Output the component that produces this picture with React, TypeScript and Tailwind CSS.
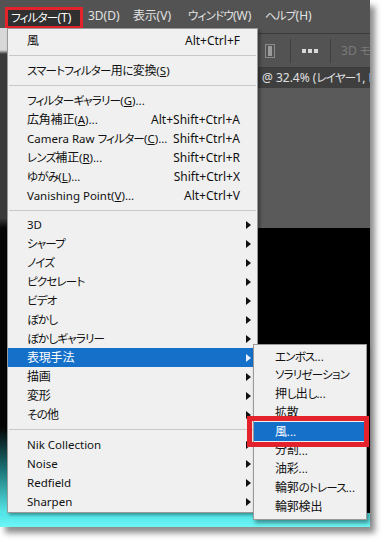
import React from "react";

const SPLIT = /([\u3040-\u30ff\uff00-\uffef]+|[\u3400-\u9fff]+)/;
const KANA = /^[\u3040-\u30ff\uff00-\uffef]+$/;
const KANJI = /^[\u3400-\u9fff]+$/;

function j(s: string): React.ReactNode {
  return s.split(SPLIT).map((part, i) =>
    KANA.test(part) ? (
      <span key={i} className="text-[11.5px] tracking-[-0.8px]">
        {part}
      </span>
    ) : KANJI.test(part) ? (
      <span key={i} className="text-[12px] tracking-[-0.2px]">
        {part}
      </span>
    ) : (
      <React.Fragment key={i}>{part}</React.Fragment>
    )
  );
}

const M = ({ pre, u, post = "" }: { pre: string; u: string; post?: string }) => (
  <>
    {j(pre)}(<u>{u}</u>){post}
  </>
);

type Row =
  | { sep: true; h: number }
  | { sep?: false; label: React.ReactNode; shortcut?: string; arrow?: boolean; active?: boolean };

const Arrow = ({ white }: { white?: boolean }) => (
  <svg width="5" height="8" viewBox="0 0 5 8" className="block">
    <polygon points="0,0 5,4 0,8" fill={white ? "#e8f2ff" : "#111"} />
  </svg>
);

const rows: Row[] = [
  { label: j("風"), shortcut: "Alt+Ctrl+F" },
  { sep: true, h: 11 },
  { label: <M pre="スマートフィルター用に変換" u="S" /> },
  { sep: true, h: 11 },
  { label: <M pre="フィルターギャラリー" u="G" post="..." /> },
  { label: <M pre="広角補正" u="A" post="..." />, shortcut: "Alt+Shift+Ctrl+A" },
  { label: <M pre="Camera Raw フィルター" u="C" post="..." />, shortcut: "Shift+Ctrl+A" },
  { label: <M pre="レンズ補正" u="R" post="..." />, shortcut: "Shift+Ctrl+R" },
  { label: <M pre="ゆがみ" u="L" post="..." />, shortcut: "Shift+Ctrl+X" },
  { label: <M pre="Vanishing Point" u="V" post="..." />, shortcut: "Alt+Ctrl+V" },
  { sep: true, h: 10 },
  { label: "3D", arrow: true },
  { label: j("シャープ"), arrow: true },
  { label: j("ノイズ"), arrow: true },
  { label: j("ピクセレート"), arrow: true },
  { label: j("ビデオ"), arrow: true },
  { label: j("ぼかし"), arrow: true },
  { label: j("ぼかしギャラリー"), arrow: true },
  { label: j("表現手法"), arrow: true, active: true },
  { label: j("描画"), arrow: true },
  { label: j("変形"), arrow: true },
  { label: j("その他"), arrow: true },
  { sep: true, h: 11 },
  { label: "Nik Collection", arrow: true },
  { label: "Noise", arrow: true },
  { label: "Redfield", arrow: true },
  { label: "Sharpen", arrow: true },
];

const subItems = [
  "エンボス...",
  "ソラリゼーション",
  "押し出し...",
  "拡散",
  "風...",
  "分割...",
  "油彩...",
  "輪郭のトレース...",
  "輪郭検出",
];

export default function App() {
  return (
    <div className="w-[386px] h-[542px] bg-white relative overflow-hidden font-['Noto_Sans','Noto_Sans_CJK_JP',sans-serif] [font-feature-settings:'palt'] text-[12px] leading-none">
      <div className="w-[370px] h-[527px] bg-[#535353] flex flex-col shadow-[5px_6px_6px_rgba(0,0,0,0.45)] relative">
        {/* Menu bar */}
        <div className="h-[28px] flex items-start text-[#e2e2e2]">
          <div className="ml-[5px] mt-[7px] w-[78px] h-[22px] border-[3px] border-[#e3222b] bg-[#303030] text-white flex items-center pl-[3px]">
            {j("フィルター")}(T)
          </div>
          <div className="ml-[5px] mt-[10px] w-[45px]">3D(D)</div>
          <div className="mt-[10px] w-[55px]">{j("表示")}(V)</div>
          <div className="mt-[10px] w-[77px]">{j("ウィンドウ")}(W)</div>
          <div className="mt-[10px]">{j("ヘルプ")}(H)</div>
        </div>

        {/* Body */}
        <div className="h-[485px] flex">
          {/* left strip */}
          <div className="w-[7px] bg-[linear-gradient(to_bottom,#d8d8d8_0px,#d8d8d8_22px,#3a3a3a_26px,#3a3a3a_190px,#050505_200px,#050505_400px,#1a6f72_440px,#55e8ea_485px)]" />

          {/* Main dropdown menu */}
          <div className="w-[251px] bg-[#f0f0f0] border border-[#9a9a9a] pt-[2px] pb-[1px] text-[#111] flex flex-col shadow-[2px_2px_3px_rgba(0,0,0,0.35)] relative z-10">
            {rows.map((r, i) =>
              r.sep ? (
                <div key={i} className="flex items-center px-[1px]" style={{ height: r.h }}>
                  <div className="h-px w-full bg-[#c8c8c8]" />
                </div>
              ) : (
                <div
                  key={i}
                  className={
                    "h-[19px] flex items-center pl-[19px] pr-[6px] " +
                    (r.active ? "bg-[#1570c9] text-white" : "")
                  }
                >
                  <span className="whitespace-nowrap text-[11.5px]">{r.label}</span>
                  <span className="ml-auto mr-[6px] whitespace-nowrap">{r.shortcut ?? ""}</span>
                  <span className="w-[5px] flex items-center">{r.arrow ? <Arrow white={r.active} /> : null}</span>
                </div>
              )
            )}
          </div>

          {/* Right area */}
          <div className="flex-1 flex flex-col overflow-hidden">
            <div className="h-[5px] bg-[#535353]" />
            <div className="h-px bg-[#3c3c3c]" />
            <div className="h-[33px] bg-[#535353] flex items-center">
              <div className="w-[33px] flex items-center pl-[7px]">
                <svg width="10" height="14" viewBox="0 0 10 14">
                  <rect x="0.5" y="0.5" width="9" height="13" fill="none" stroke="#8a8a8a" />
                  <rect x="3" y="2" width="4" height="10" fill="#9a9a9a" />
                </svg>
              </div>
              <div className="w-px h-[24px] bg-[#3f3f3f]" />
              <div className="w-[42px] flex items-center justify-center gap-[2px]">
                <span className="w-[4px] h-[4px] bg-[#d8d8d8]" />
                <span className="w-[4px] h-[4px] bg-[#d8d8d8]" />
                <span className="w-[4px] h-[4px] bg-[#d8d8d8]" />
              </div>
              <div className="w-px h-[24px] bg-[#3f3f3f]" />
              <div className="pl-[10px] text-[#7a7a7a] whitespace-nowrap">3D {j("モ")}</div>
            </div>
            <div className="h-px bg-[#3c3c3c]" />
            <div className="h-[20px] bg-[#3f3f3f] flex items-center pl-[4px] text-[#e0e0e0] whitespace-nowrap">
              @ 32.4% ({j("レイヤー")} 1, RGB/8)
            </div>
            <div className="h-[140px] bg-[#5a5a5a]" />
            <div className="flex-1 bg-black" />
          </div>
        </div>

        {/* bottom cyan strip */}
        <div className="h-[14px] bg-[linear-gradient(to_bottom,#4fe3e6,#6ff6f6)]" />

        {/* Submenu */}
        <div className="absolute left-[253px] top-[344px] w-[114px] bg-[#f0f0f0] border border-[#9a9a9a] pt-[2px] pb-[3px] text-[#111] text-[11.5px] shadow-[2px_3px_4px_rgba(0,0,0,0.4)] z-20">
          {subItems.map((s, i) => (
            <div
              key={i}
              className={
                "h-[18.8px] flex items-center pl-[21px] whitespace-nowrap " +
                (s === "風..." ? "bg-[#1570c9] text-white" : "")
              }
            >
              {j(s)}
            </div>
          ))}
          <div className="absolute left-[-7px] top-[71px] w-[122px] h-[31px] border-[5px] border-[#e3222b]" />
        </div>
      </div>
    </div>
  );
}
